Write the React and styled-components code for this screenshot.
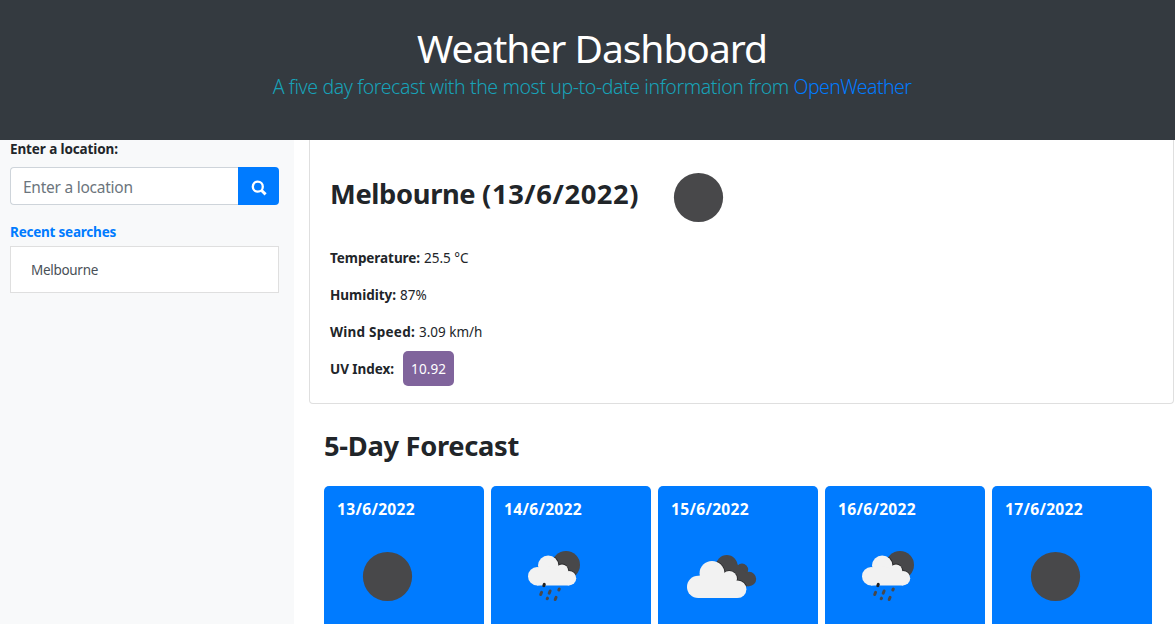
import React, { useId } from "react";
import styled, { createGlobalStyle } from "styled-components";

const GlobalStyle = createGlobalStyle`
  *, *::before, *::after { box-sizing: border-box; }
  body {
    margin: 0;
    overflow: hidden;
    background: #fff;
    color: #212529;
    font-family: "Noto Sans", "Open Sans", sans-serif;
    font-size: 13.5px;
  }
`;

const Page = styled.div`
  height: 624px;
  overflow: hidden;
  display: flex;
  flex-direction: column;
`;

const Header = styled.header`
  flex: none;
  height: 140px;
  padding: 24px 0 0 9px;
  background: #343a40;
  text-align: center;
  white-space: nowrap;
`;

const Title = styled.h1`
  margin: 0;
  color: #fff;
  font-size: 39px;
  font-weight: 400;
  line-height: 48px;
  letter-spacing: -1.04px;
`;

const Subtitle = styled.p`
  margin: 0;
  color: #17a2b8;
  font-size: 19.5px;
  font-weight: 300;
  line-height: 30px;
  letter-spacing: -0.4px;
`;

const SourceLink = styled.a`
  color: #007bff;
  letter-spacing: -0.58px;
`;

const Body = styled.div`
  flex: 1;
  min-height: 0;
  display: flex;
`;

const Sidebar = styled.aside`
  flex: none;
  width: 294px;
  padding: 0 15px 0 10px;
  background: #f8f9fa;
`;

const Label = styled.label`
  display: block;
  font-weight: 700;
  line-height: 18px;
  letter-spacing: -0.11px;
`;

const SearchGroup = styled.div`
  display: flex;
  height: 38px;
  margin: 9px 0 17px;
`;

const SearchInput = styled.input`
  flex: 1;
  min-width: 0;
  padding: 1px 12px 0;
  border: 1px solid #ced4da;
  border-right: 0;
  border-radius: 4px 0 0 4px;
  background: #fff;
  font: 400 15.5px "Noto Sans", sans-serif;
  letter-spacing: -0.25px;
  outline: 0;
  &::placeholder { color: #6c757d; opacity: 1; }
`;

const SearchButton = styled.button`
  width: 41px;
  padding: 3px 0 0;
  border: 0;
  border-radius: 0 4px 4px 0;
  background: #007bff;
  color: #fff;
  display: flex;
  align-items: center;
  justify-content: center;
`;

const SearchGlyph = styled.svg`
  width: 16px;
  height: 16px;
  fill: none;
  stroke: currentColor;
`;

const RecentTitle = styled.h2`
  margin: 0 0 3px;
  color: #007bff;
  font-size: 13.5px;
  font-weight: 700;
  line-height: 21px;
  letter-spacing: -0.22px;
`;

const RecentItem = styled.div`
  height: 47px;
  padding-left: 20px;
  border: 1px solid #dfdfdf;
  background: #fff;
  color: #495057;
  line-height: 47px;
  letter-spacing: -0.3px;
`;

const Main = styled.main`
  flex: 1;
  min-width: 0;
  padding: 0 1px 0 15px;
`;

const CurrentCard = styled.section`
  height: 264px;
  padding: 7px 20px 0;
  border: 1px solid #dfdfdf;
  border-top: 0;
  border-radius: 0 0 4px 4px;
`;

const CurrentHeading = styled.div`
  display: flex;
  align-items: flex-start;
  gap: 9px;
  height: 92px;
`;

const Heading = styled.h3`
  margin: 0;
  font-size: 27.3px;
  font-weight: 700;
  line-height: 34px;
  white-space: nowrap;
  letter-spacing: ${(p) => p.$track}px;
`;

const CityHeading = styled(Heading)`
  width: 309px;
  padding-top: 30px;
`;

const CityDate = styled.span`
  letter-spacing: 0.6px;
`;

const Reading = styled.div`
  display: flex;
  align-items: center;
  height: 37px;
  line-height: 39px;
  gap: ${(p) => p.$gap || 4}px;
`;

const ReadingName = styled.strong`
  font-weight: 700;
  letter-spacing: ${(p) => p.$track}px;
`;

const ReadingLine = styled.span`
  height: 37px;
`;

const UvBadge = styled.span`
  width: 51px;
  height: 35px;
  border-radius: 5px;
  background: #80649c;
  color: #fff;
  line-height: 37px;
  letter-spacing: 0.1px;
  text-align: center;
`;

const Forecast = styled.section`
  padding: 25px 0 0 15px;
`;

const DayList = styled.div`
  display: flex;
  gap: 7px;
  margin-top: 23px;
`;

const DayCard = styled.article`
  width: 160px;
  height: 240px;
  padding: 11px 13px;
  border-radius: 5px;
  background: #007bff;
  color: #fff;
`;

const DayDate = styled.h4`
  margin: 0 0 5px;
  font-size: 15.6px;
  font-weight: 700;
  line-height: 24px;
  letter-spacing: 0.29px;
`;

const Icon = styled.svg`
  display: block;
  flex: none;
  width: 101px;
  height: 101px;
`;

function ClearNight() {
  return (
    <Icon viewBox="0 0 101 101">
      <circle cx="50.5" cy="50.5" r="24.6" fill="#48484a" />
    </Icon>
  );
}

const RAIN_CLOUD = (
  <>
    <circle cx="33.2" cy="50.3" r="9.2" />
    <circle cx="44.2" cy="39.6" r="10.2" />
    <circle cx="58" cy="44.6" r="6.2" />
    <circle cx="65" cy="52.2" r="7.2" />
    <path d="M33 42 L44 40 L58 44 L65 50 V59.4 H33Z" />
  </>
);

function RainNight() {
  const id = useId();
  return (
    <Icon viewBox="0 0 101 101">
      <clipPath id={id}>
        <circle cx="62" cy="39" r="14" />
      </clipPath>
      <circle cx="62" cy="39" r="14" fill="#48484a" />
      <g clipPath={`url(#${id})`} fill="#2a2a2c" stroke="#2a2a2c" strokeWidth="1.6">{RAIN_CLOUD}</g>
      <g fill="#f2f2f2">{RAIN_CLOUD}</g>
      <g stroke="#48484a" strokeWidth="3" strokeLinecap="round">
        <path d="M40.3 58.4 L39.8 59.7" stroke="#222" />
        <path d="M37.6 66.3 L36.7 68.5 M46.1 65 L45.2 67.2 M55.3 63 L54.8 64 M43.5 72.2 L43.2 72.7 M52.1 71.3 L51.2 73.5" />
      </g>
    </Icon>
  );
}

const FRONT_CLOUD = (
  <>
    <circle cx="27.2" cy="60.9" r="11.2" />
    <circle cx="41" cy="47.3" r="12.4" />
    <circle cx="58.2" cy="52.8" r="7.8" />
    <circle cx="66.6" cy="63.3" r="8.8" />
    <path d="M27 50 L41 47 L58 52 L66 60 V72.1 H27Z" />
  </>
);

const BACK_CLOUD = (
  <>
    <circle cx="55.8" cy="39.8" r="10.8" />
    <circle cx="71" cy="43.8" r="6.2" />
    <circle cx="78" cy="53" r="7.2" />
    <path d="M55 30 L71 42 L78 50 V60.2 H62 L46 42Z" />
  </>
);

function BrokenClouds() {
  const id = useId();
  return (
    <Icon viewBox="0 0 101 101">
      <clipPath id={id}>{BACK_CLOUD.props.children}</clipPath>
      <g fill="#48484a">{BACK_CLOUD}</g>
      <g clipPath={`url(#${id})`} fill="#2a2a2c" stroke="#2a2a2c" strokeWidth="1.6">{FRONT_CLOUD}</g>
      <g fill="#f2f2f2">{FRONT_CLOUD}</g>
    </Icon>
  );
}

const READINGS = [
  { name: "Temperature:", value: "25.5 °C", track: -0.06 },
  { name: "Humidity:", value: "87%", track: -0.02 },
  { name: "Wind Speed:", value: "3.09 km/h", track: 0.24 },
];

const DAYS = [
  { date: "13/6/2022", Weather: ClearNight },
  { date: "14/6/2022", Weather: RainNight },
  { date: "15/6/2022", Weather: BrokenClouds },
  { date: "16/6/2022", Weather: RainNight },
  { date: "17/6/2022", Weather: ClearNight },
];

export default function App() {
  return (
    <Page>
      <GlobalStyle />
      <Header>
        <Title>Weather Dashboard</Title>
        <Subtitle>
          A five day forecast with the most up-to-date information from{" "}
          <SourceLink>OpenWeather</SourceLink>
        </Subtitle>
      </Header>
      <Body>
        <Sidebar>
          <Label htmlFor="location">Enter a location:</Label>
          <SearchGroup>
            <SearchInput id="location" placeholder="Enter a location" />
            <SearchButton aria-label="Search">
              <SearchGlyph viewBox="0 0 16 16">
                <circle cx="6.8" cy="6.7" r="5" strokeWidth="2.3" />
                <path d="M10.6 10.5 L14.6 14.4" strokeWidth="3" />
              </SearchGlyph>
            </SearchButton>
          </SearchGroup>
          <RecentTitle>Recent searches</RecentTitle>
          <RecentItem>Melbourne</RecentItem>
        </Sidebar>
        <Main>
          <CurrentCard>
            <CurrentHeading>
              <CityHeading $track={-0.35}>
                Melbourne <CityDate>(13/6/2022)</CityDate>
              </CityHeading>
              <ClearNight />
            </CurrentHeading>
            {READINGS.map((r) => (
              <Reading key={r.name}>
                <ReadingLine>
                  <ReadingName $track={r.track}>{r.name}</ReadingName>
                </ReadingLine>
                <ReadingLine>{r.value}</ReadingLine>
              </Reading>
            ))}
            <Reading $gap={9}>
              <ReadingLine>
                <ReadingName $track={-0.04}>UV Index:</ReadingName>
              </ReadingLine>
              <UvBadge>10.92</UvBadge>
            </Reading>
          </CurrentCard>
          <Forecast>
            <Heading $track={-0.31}>5-Day Forecast</Heading>
            <DayList>
              {DAYS.map(({ date, Weather }) => (
                <DayCard key={date}>
                  <DayDate>{date}</DayDate>
                  <Weather />
                </DayCard>
              ))}
            </DayList>
          </Forecast>
        </Main>
      </Body>
    </Page>
  );
}
